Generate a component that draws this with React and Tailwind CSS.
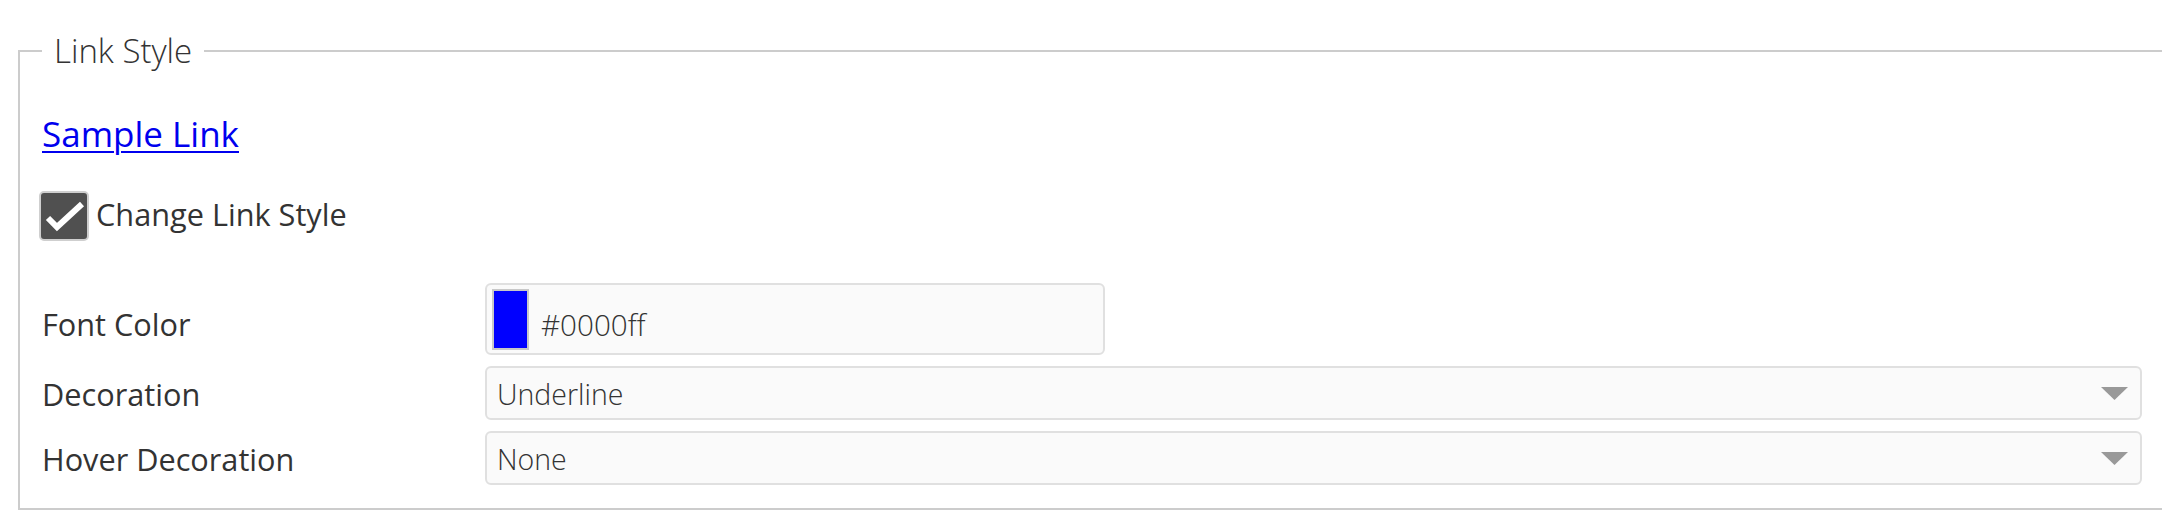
import React from "react";

const Arrow = () => (
  <svg width="27" height="13" viewBox="0 0 27 13" className="shrink-0">
    <polygon points="0,0 27,0 13.5,13" fill="#999999" />
  </svg>
);

const SelectBox = ({ value }) => (
  <div className="flex h-[54px] flex-1 items-center justify-between rounded-[6px] border-2 border-[#e0e0e0] bg-[#fafafa] pl-[10px] pr-[12px]">
    <span className="mt-[3px] text-[28.5px] font-light leading-none text-[#333]">{value}</span>
    <Arrow />
  </div>
);

export default function App() {
  return (
    <div className="w-full overflow-hidden bg-white font-['Open_Sans',sans-serif] text-[#333]">
      <fieldset className="ml-[18px] mt-[33px] w-[2148px] border-2 border-[#cccccc] px-[22px] pb-[23px]">
        <legend className="px-[12px] text-[33px] font-light leading-[36px] text-[#333]">Link Style</legend>

        <div className="mt-[43px] text-[35px] leading-[44px]">
          <a href="#" className="text-[#0000ee] underline decoration-2 underline-offset-[4px]">
            Sample Link
          </a>
        </div>

        <label className="mt-[35px] flex h-[50px] items-center gap-[7px]">
          <span className="ml-[-3px] flex h-[50px] w-[50px] items-center justify-center rounded-[5px] border-2 border-[#cfcfcf] bg-[#505050]">
            <svg width="46" height="46" viewBox="0 0 46 46">
              <polyline points="7,25 16,34 41,11" fill="none" stroke="#ffffff" strokeWidth="6" strokeLinejoin="miter" />
            </svg>
          </span>
          <span className="mt-[-3px] text-[30.7px] leading-none">Change Link Style</span>
        </label>

        <div className="mt-[42px] grid grid-cols-[443px_1fr] gap-y-[11px]">
          <div className="self-center pt-[10px] text-[30.7px] leading-none">Font Color</div>
          <div className="flex">
            <div className="flex h-[72px] w-[620px] items-center rounded-[6px] border-2 border-[#e0e0e0] bg-[#fafafa] pl-[5px]">
              <span className="h-[61px] w-[37px] border-2 border-[#c8c8c8] bg-[#0000ff]" />
              <span className="ml-[12px] mt-[11px] text-[29.6px] font-light leading-none text-[#333]">#0000ff</span>
            </div>
          </div>

          <div className="self-center pt-[3px] text-[30.7px] leading-none">Decoration</div>
          <SelectBox value="Underline" />

          <div className="self-center pt-[3px] text-[30.7px] leading-none">Hover Decoration</div>
          <SelectBox value="None" />
        </div>
      </fieldset>
    </div>
  );
}
